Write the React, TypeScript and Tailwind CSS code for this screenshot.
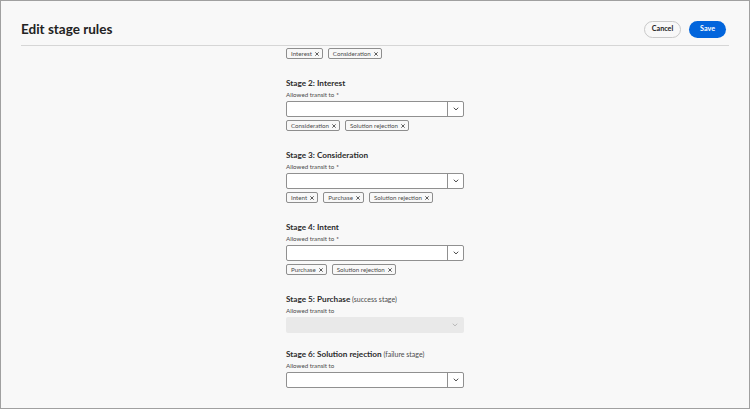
import React from "react";

interface Stage {
  title: string;
  note?: string;
  required: boolean;
  disabled?: boolean;
  tags: string[];
}

// stage 1 is scrolled up under the header, only its tags row still shows
const firstTags = ["Interest", "Consideration"];

const stages: Stage[] = [
  { title: "Stage 2: Interest", required: true, tags: ["Consideration", "Solution rejection"] },
  { title: "Stage 3: Consideration", required: true, tags: ["Intent", "Purchase", "Solution rejection"] },
  { title: "Stage 4: Intent", required: true, tags: ["Purchase", "Solution rejection"] },
  { title: "Stage 5: Purchase", note: "(success stage)", required: false, disabled: true, tags: [] },
  { title: "Stage 6: Solution rejection", note: "(failure stage)", required: false, tags: [] },
];

const font = { fontFamily: "Lato, 'Open Sans', sans-serif" };

const Chevron = ({ light }: { light?: boolean }) => (
  <svg width="6" height="4" viewBox="0 0 6 4" fill="none">
    <path
      d="M1 1 L3 2.9 L5 1"
      stroke={light ? "#b9b9b9" : "#4b4b4b"}
      strokeWidth="1"
      strokeLinecap="round"
      strokeLinejoin="round"
    />
  </svg>
);

const Cross = () => (
  <svg width="4" height="4" viewBox="0 0 4 4" fill="none">
    <path d="M0.6 0.6 L3.4 3.4 M3.4 0.6 L0.6 3.4" stroke="#4b4b4b" strokeWidth="0.9" strokeLinecap="round" />
  </svg>
);

const Tags = ({ tags }: { tags: string[] }) => (
  <div className="h-[11px] flex gap-[5px]">
    {tags.map((tag) => (
      <div
        key={tag}
        className="h-[11px] pl-[4px] pr-[3px] flex items-center gap-[3px] border border-[#8e8e8e] rounded-[2px] text-[6.2px] text-[#4b4b4b] whitespace-nowrap"
      >
        {tag}
        <Cross />
      </div>
    ))}
  </div>
);

const Picker = ({ disabled }: { disabled?: boolean }) => {
  if (disabled) {
    return (
      <div className="mt-px h-[16px] rounded-[2px] bg-[#e9e9e9] flex justify-end items-center pr-[6px]">
        <Chevron light />
      </div>
    );
  }
  return (
    <div className="mt-px h-[16px] rounded-[2px] bg-white border border-[#909090] flex">
      <div className="flex-1" />
      <div className="w-[16px] border-l border-[#909090] flex items-center justify-center">
        <Chevron />
      </div>
    </div>
  );
};

const StageBlock = ({ stage, className }: { stage: Stage; className: string }) => (
  <div className={className}>
    <div className="h-[12px] leading-[12px] text-[8.2px] font-bold text-[#2c2c2c] whitespace-nowrap">
      {stage.title}
      {stage.note && <span className="font-normal text-[7px] text-[#4b4b4b]"> {stage.note}</span>}
    </div>
    <div className="mt-px h-[10px] leading-[10px] text-[6.2px] text-[#4b4b4b] whitespace-nowrap">
      Allowed transit to{stage.required && <span className="ml-[2px] text-[#2c2c2c]">*</span>}
    </div>
    <Picker disabled={stage.disabled} />
    {stage.tags.length > 0 && (
      <div className="mt-[3px]">
        <Tags tags={stage.tags} />
      </div>
    )}
  </div>
);

export default function App() {
  return (
    <div
      style={font}
      className="w-[750px] h-[409px] bg-[#f8f8f8] border border-[#a0a0a0] flex flex-col overflow-hidden"
    >
      <div className="px-[20px] pt-[20px] pb-[7px]">
        <div className="h-[17px] flex items-center justify-between">
          <h1 className="text-[13.5px] font-bold text-[#222222]">Edit stage rules</h1>
          <div className="flex gap-[8px] mr-[3px]">
            <button className="h-[17px] w-[37px] rounded-full border border-[#c9c9c9] text-[7.2px] font-bold text-[#222222]">
              Cancel
            </button>
            <button className="h-[17px] w-[37px] rounded-full bg-[#0265dc] text-[7.2px] font-bold text-white">
              Save
            </button>
          </div>
        </div>
      </div>
      <div className="mx-[20px] h-px bg-[#d6d6d6]" />
      <div className="flex-1 overflow-hidden">
        <div className="w-[178px] mx-auto pt-[2px]">
          <Tags tags={firstTags} />
          {stages.map((stage, i) => (
            <StageBlock key={stage.title} stage={stage} className={i === 4 ? "mt-[15px]" : "mt-[18px]"} />
          ))}
        </div>
      </div>
    </div>
  );
}
